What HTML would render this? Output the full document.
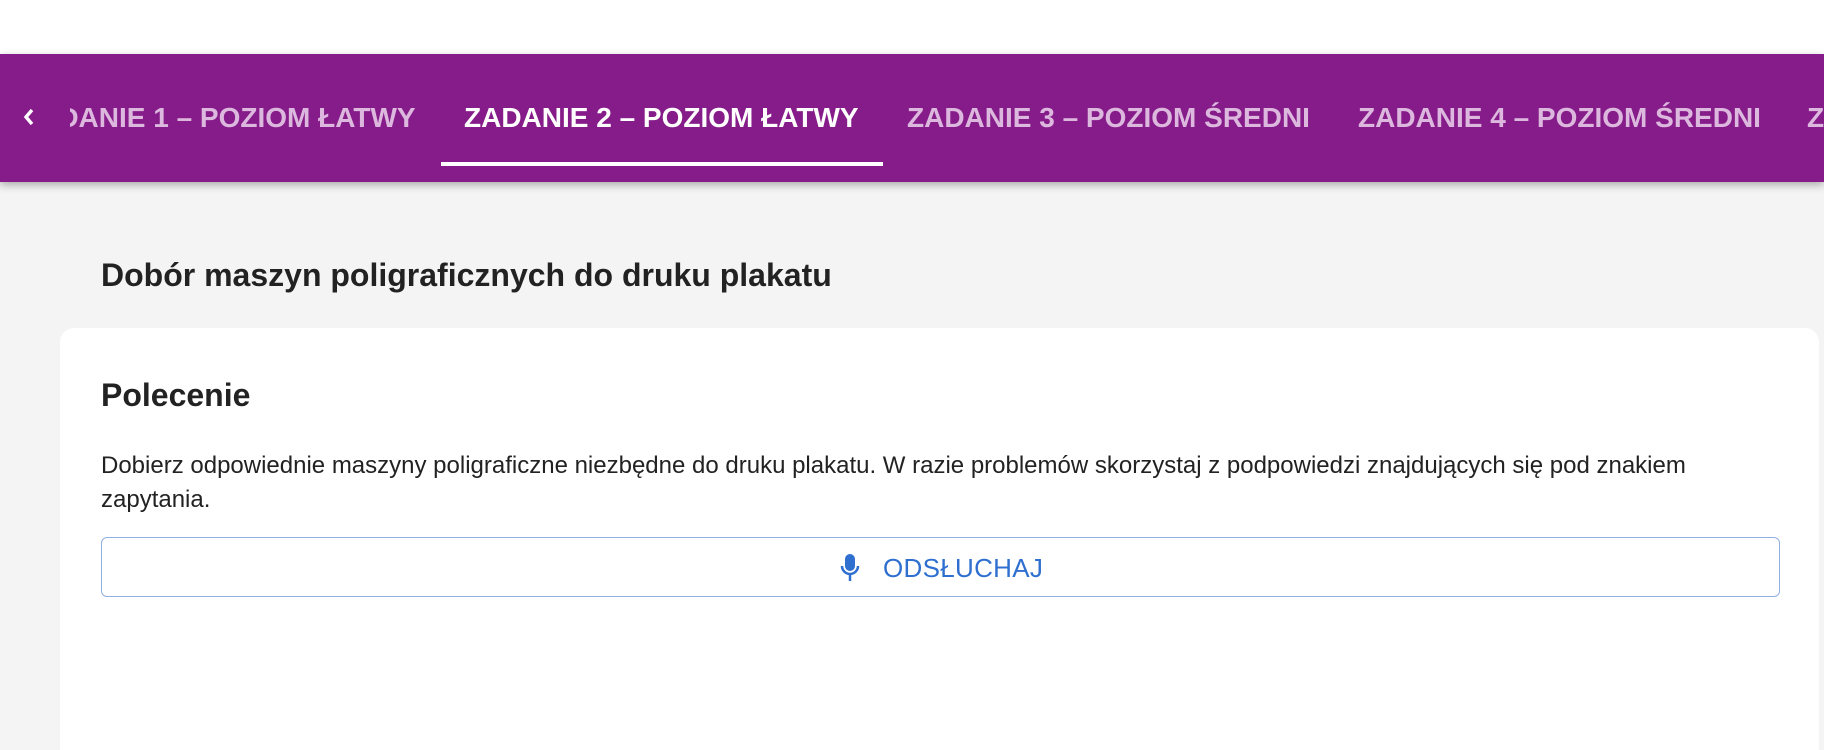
<!DOCTYPE html>
<html><head><meta charset="utf-8"><style>
*{margin:0;padding:0;box-sizing:border-box}
html,body{width:1824px;height:750px;overflow:hidden}
body{background:#f4f4f4;font-family:"Liberation Sans",Arial,sans-serif;position:relative}
.top{position:absolute;left:0;top:0;width:1824px;height:54px;background:#fff}
.nav{position:absolute;left:0;top:54px;width:1824px;height:128px;background:#861c89;box-shadow:0 3px 8px rgba(0,0,0,.3);overflow:hidden}
.tab{position:absolute;top:0;height:128px;line-height:128px;font-size:28px;font-weight:bold;color:#dcb7de;white-space:nowrap}
.act{color:#fff}
.ul{position:absolute;left:441px;top:108px;width:442px;height:4px;background:#fff}
.chev{position:absolute;left:21px;top:50px}
h1{position:absolute;left:101px;top:257px;font-size:32px;font-weight:bold;color:#222}
.card{position:absolute;left:60px;top:328px;width:1759px;height:422px;background:#fff;border-radius:14px 14px 0 0}
h2{position:absolute;left:101px;top:377px;font-size:32px;font-weight:bold;color:#222}
p{position:absolute;left:101px;top:449px;width:1600px;font-size:24px;line-height:34px;color:#222}
.btn{position:absolute;left:101px;top:537px;width:1679px;height:60px;border:1.5px solid #90b0e4;border-radius:6px;color:#2f6fd0;font-size:26px;letter-spacing:.3px}
.btn span{position:absolute;left:781px;top:15px}
.btn svg{position:absolute;left:738px;top:15px}
</style></head><body>
<div class="top"></div>
<div class="nav">
<svg class="chev" width="16" height="26" viewBox="0 0 16 26"><path d="M11 6 L5 13 L11 20" stroke="#fff" stroke-width="3.4" fill="none"/></svg>
<div class="tab" style="left:21px;clip-path:inset(0 0 0 49px)">ZADANIE 1 – POZIOM ŁATWY</div>
<div class="tab act" style="left:464px">ZADANIE 2 – POZIOM ŁATWY</div>
<div class="ul"></div>
<div class="tab" style="left:907px">ZADANIE 3 – POZIOM ŚREDNI</div>
<div class="tab" style="left:1358px">ZADANIE 4 – POZIOM ŚREDNI</div>
<div class="tab" style="left:1807px">ZADANIE 5</div>
</div>
<h1>Dobór maszyn poligraficznych do druku plakatu</h1>
<div class="card"></div>
<h2>Polecenie</h2>
<p>Dobierz odpowiednie maszyny poligraficzne niezbędne do druku plakatu. W razie problemów skorzystaj z podpowiedzi znajdujących się pod znakiem zapytania.</p>
<div class="btn"><svg width="20" height="30" viewBox="0 0 20 30"><rect x="5" y="1" width="10" height="17" rx="5" fill="#2f6fd0"/><path d="M2 13 a8 8 0 0 0 16 0" stroke="#2f6fd0" stroke-width="2.5" fill="none"/><path d="M10 21 V28" stroke="#2f6fd0" stroke-width="2.5"/></svg><span>ODSŁUCHAJ</span></div>
</body></html>
